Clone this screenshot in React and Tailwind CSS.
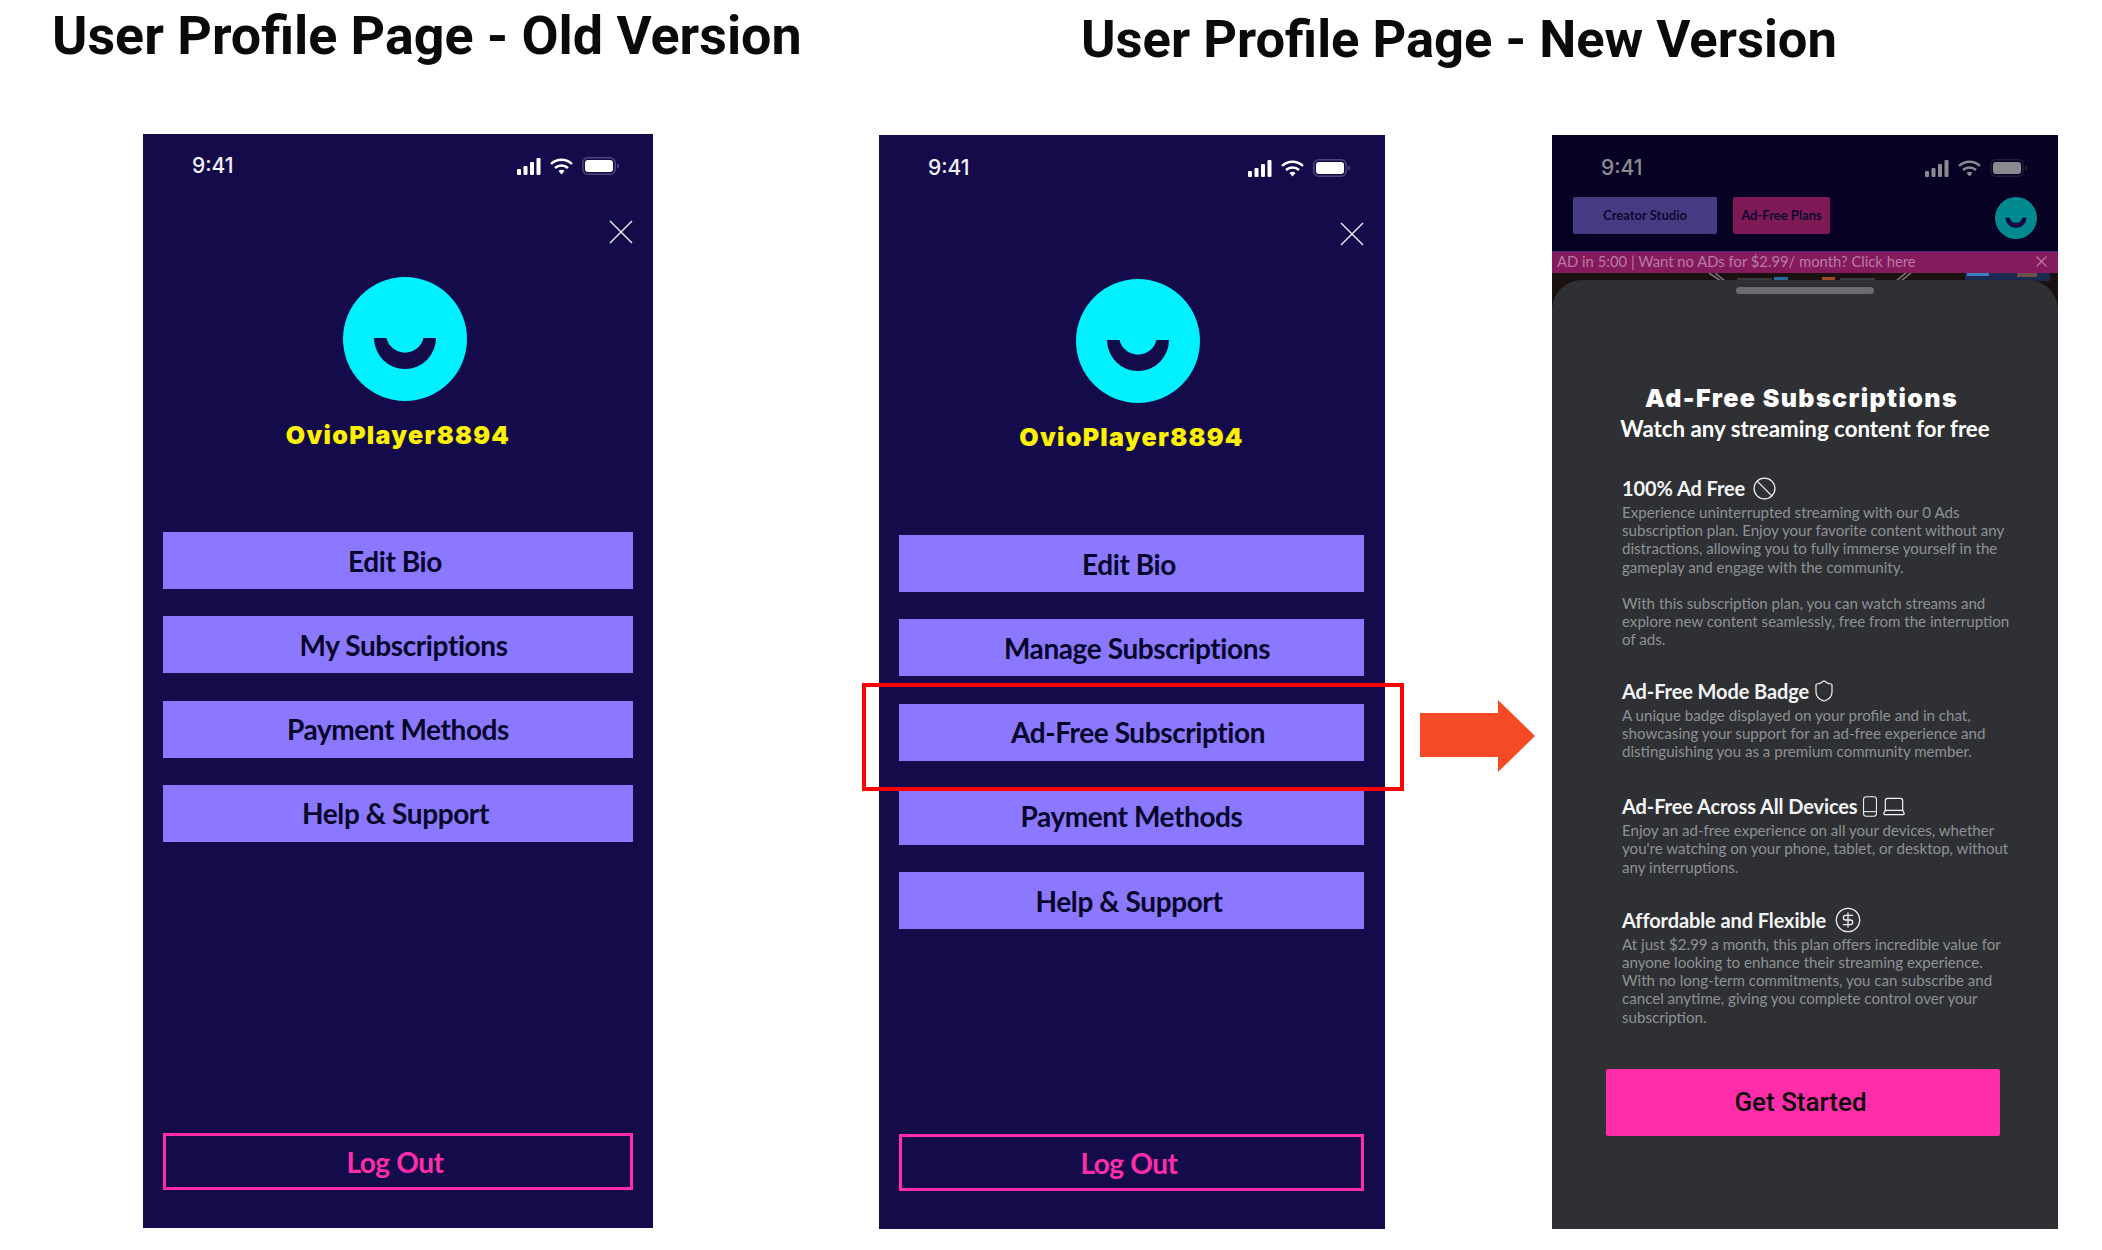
import { Ban, Shield, Laptop, CircleDollarSign } from "lucide-react";

const bodyFont = "font-['Lato','Noto_Sans',sans-serif]";

function CloseIcon({ size, stroke, color }) {
    return (
        <svg width={size} height={size} viewBox="0 0 24 24" fill="none" stroke={color} strokeWidth={stroke}>
            <path d="M1 1l22 22M23 1L1 23" />
        </svg>
    );
}

function StatusIcons({ color, edge }) {
    return (
        <div className="flex items-center gap-[9px]">
            <svg width="24" height="17" viewBox="0 0 24 17">
                <rect x="0" y="11" width="4" height="6" rx="1" fill={color} />
                <rect x="6.5" y="8" width="4" height="9" rx="1" fill={color} />
                <rect x="13" y="4" width="4" height="13" rx="1" fill={color} />
                <rect x="19.5" y="0" width="4" height="17" rx="1" fill={color} />
            </svg>
            <svg width="23" height="17" viewBox="0 0 23 17">
                <path d="M1 6a15 15 0 0 1 21 0" fill="none" stroke={color} strokeWidth="2.4" />
                <path d="M5 10a9.5 9.5 0 0 1 13 0" fill="none" stroke={color} strokeWidth="2.4" />
                <path d="M8.5 13a4.5 4.5 0 0 1 6 0l-3 3.5z" fill={color} />
            </svg>
            <svg width="37" height="18" viewBox="0 0 37 18">
                <rect x="0.8" y="0.8" width="32.400" height="16.400" rx="5" fill="none" stroke={edge} strokeWidth="1.6" />
                <rect x="3" y="3" width="28" height="12" rx="3" fill={color} />
                <rect x="35" y="7" width="2" height="4" rx="1" fill={edge} />
            </svg>
        </div>
    );
}

function Smile({ size, color }) {
    return (
        <svg width={size} height={size} viewBox="0 0 124 124">
            <circle cx="62" cy="62" r="62" fill={color} />
            <path d="M31 61h12.500a19 19 0 0 0 37 0H93a31 31 0 0 1-62 0z" fill="#140c4a" />
        </svg>
    );
}

function MenuButton({ label, offset }) {
    return (
        <div className={`flex h-[57px] items-center justify-center bg-[#8b78ff] text-[28px] font-bold tracking-[-0.4px] text-[#07052a] ${bodyFont} ${offset}`}>
            {label}
        </div>
    );
}

function ProfilePhone({ items, avatarShift, logoutOffset, width, statusHeight, edgeRight, closeGap, listGap }) {
    return (
        <div className={`flex h-[1094px] flex-col bg-[#140c4a] pl-[20px] ${edgeRight} ${width}`}>
            <div className={`flex items-center justify-between pl-[29px] pr-[14px] ${statusHeight}`}>
                <span className="font-['Inter',sans-serif] text-[21px] font-medium text-[#f2f2f6]">9:41</span>
                <StatusIcons color="#ffffff" edge="#4a4478" />
            </div>
            <div className={`flex justify-end ${closeGap}`}>
                <CloseIcon size={24} stroke={1.4} color="#f2f2f6" />
            </div>
            <div className={`mt-[33px] flex justify-center ${avatarShift}`}>
                <Smile size={124} color="#00f0ff" />
            </div>
            <div className="mt-[19px] text-center font-['Inter',sans-serif] text-[25px] leading-[30px] font-black tracking-[1.3px] text-[#fff200]">
                OvioPlayer8894
            </div>
            <div className={`flex flex-col gap-[27.300px] ${listGap}`}>
                {items.map((item) => (
                    <MenuButton key={item.label} label={item.label} offset={item.offset} />
                ))}
            </div>
            <div className={`mt-auto mb-[38px] flex h-[57px] items-center justify-center border-[3px] border-[#ff2daa] text-[28px] font-bold tracking-[-0.4px] text-[#ff2daa] ${bodyFont} ${logoutOffset}`}>
                Log Out
            </div>
        </div>
    );
}

function Feature({ title, icons, className, children }) {
    return (
        <div className={className}>
            <div className={`flex h-[24px] items-center gap-[5px] text-[20px] font-bold tracking-[-0.1px] text-[#f4f4f4] ${bodyFont}`}>
                <span>{title}</span>
                {icons}
            </div>
            <p className={`mt-[3px] text-[15.100px] leading-[18.2px] whitespace-nowrap text-[#8f9194] ${bodyFont}`}>{children}</p>
        </div>
    );
}

function SubscriptionPhone() {
    return (
        <div className="flex h-[1094px] w-[506px] flex-col bg-[#070224]">
            <div className="flex h-[66px] items-center justify-between pl-[49px] pr-[31px]">
                <span className="font-['Inter',sans-serif] text-[21px] font-medium text-[#8a8a92]">9:41</span>
                <StatusIcons color="#8a8a92" edge="#1f1d38" />
            </div>
            <div className="-mt-[4px] flex h-[54px] items-start px-[21px]">
                <div className={`flex h-[37px] w-[144px] items-center justify-center rounded-[2px] bg-[#483a82] text-[13px] font-bold text-[#0c0830] ${bodyFont}`}>Creator Studio</div>
                <div className={`ml-[16px] flex h-[37px] w-[97px] items-center justify-center rounded-[2px] bg-[#7d1a56] text-[13px] font-bold text-[#0c0830] ${bodyFont}`}>Ad-Free Plans</div>
                <div className="ml-auto">
                    <Smile size={42} color="#008a8f" />
                </div>
            </div>
            <div className={`flex h-[22px] items-center justify-between border-t border-[#4a2a78] bg-[#851a5c] pb-[2px] pl-[5px] pr-[11px] text-[14.800px] whitespace-nowrap text-[#b87aa5] ${bodyFont}`}>
                <span>AD in 5:00 | Want no ADs for $2.99/ month? Click here</span>
                <CloseIcon size={11} stroke={2.6} color="#b87aa5" />
            </div>
            <div className="relative flex flex-1 flex-col overflow-hidden bg-[#1a1210] pt-[7px]">
                <svg className="absolute top-0 left-0" width="506" height="8" viewBox="0 0 506 8">
                    <path d="M157 0l12 8M163 0l10 8M349 8l10-8M344 8l10-8" stroke="#77777c" strokeWidth="1.6" />
                    <rect x="185" y="5" width="35" height="3" fill="#3a3a3e" />
                    <rect x="222" y="4" width="14" height="4" fill="#2a6a9a" />
                    <rect x="270" y="4" width="13" height="4" fill="#a04a2a" />
                    <rect x="288" y="5" width="35" height="3" fill="#3a3a3e" />
                    <rect x="413" y="0" width="85" height="8" fill="#1c2a52" />
                    <rect x="415" y="0" width="22" height="3" fill="#3f7fc4" />
                    <rect x="465" y="0" width="20" height="4" fill="#6a5048" />
                </svg>
                <div className="relative flex flex-1 flex-col rounded-t-[30px] bg-[#2e3034]">
                    <div className="mx-auto mt-[7px] h-[7px] w-[138px] rounded-full bg-[#6b6c6e]" />
                    <div className="mt-[89px] pr-[7px] text-center font-['Inter',sans-serif] text-[25px] leading-[30px] font-black tracking-[1.4px] text-white">
                        Ad-Free Subscriptions
                    </div>
                    <div className={`mt-[2px] text-center text-[22.300px] leading-[28px] font-bold text-white ${bodyFont}`}>
                        Watch any streaming content for free
                    </div>
                    <div className="pl-[70px]">
                        <Feature className="mt-[33px]" title="100% Ad Free" icons={<Ban size={25} strokeWidth={1.2} className="ml-[2px]" />}>
                            Experience uninterrupted streaming with our 0 Ads<br />
                            subscription plan. Enjoy your favorite content without any<br />
                            distractions, allowing you to fully immerse yourself in the<br />
                            gameplay and engage with the community.<br />
                            <br />
                            With this subscription plan, you can watch streams and<br />
                            explore new content seamlessly, free from the interruption<br />
                            of ads.
                        </Feature>
                        <Feature className="mt-[30px]" title="Ad-Free Mode Badge" icons={<Shield size={24} strokeWidth={1.2} className="-ml-[2px]" />}>
                            A unique badge displayed on your profile and in chat,<br />
                            showcasing your support for an ad-free experience and<br />
                            distinguishing you as a premium community member.
                        </Feature>
                        <Feature
                            className="mt-[34px]"
                            title="Ad-Free Across All Devices"
                            icons={
                                <span className="flex items-center gap-[4px]">
                                    <svg width="14" height="21" viewBox="0 0 15 22" fill="none" stroke="currentColor" strokeWidth="1.1">
                                        <rect x="0.6" y="0.6" width="13.800" height="20.800" rx="3" />
                                        <path d="M1 16.500h13" />
                                    </svg>
                                    <Laptop size={26} strokeWidth={1.1} />
                                </span>
                            }
                        >
                            Enjoy an ad-free experience on all your devices, whether<br />
                            you're watching on your phone, tablet, or desktop, without<br />
                            any interruptions.
                        </Feature>
                        <Feature className="mt-[32px]" title="Affordable and Flexible" icons={<CircleDollarSign size={28} strokeWidth={1.1} className="ml-[3px]" />}>
                            At just $2.99 a month, this plan offers incredible value for<br />
                            anyone looking to enhance their streaming experience.<br />
                            With no long-term commitments, you can subscribe and<br />
                            cancel anytime, giving you complete control over your<br />
                            subscription.
                        </Feature>
                    </div>
                    <div className="mt-[43px] ml-[54px] flex h-[67px] w-[394px] items-center justify-center rounded-[2px] bg-[#ff2daa] pr-[5px] pt-[1px] font-['Roboto',sans-serif] text-[26px] font-medium text-[#0a0a0a]">
                        Get Started
                    </div>
                </div>
            </div>
        </div>
    );
}

const oldItems = [
    { label: "Edit Bio", offset: "pr-[6px]" },
    { label: "My Subscriptions", offset: "pl-[11px]" },
    { label: "Payment Methods", offset: "" },
    { label: "Help & Support", offset: "pr-[5px]" },
];

const newItems = [
    { label: "Edit Bio", offset: "pr-[5px]" },
    { label: "Manage Subscriptions", offset: "pl-[11px]" },
    { label: "Ad-Free Subscription", offset: "pl-[13px]" },
    { label: "Payment Methods", offset: "" },
    { label: "Help & Support", offset: "pr-[5px]" },
];

export default function App() {
    return (
        <div className="flex h-[1250px] w-[2102px] overflow-hidden bg-white">
            <div className="w-[879px] shrink-0">
                <h1 className="flex h-[134px] items-start pt-[8px] pl-[52px] font-['Roboto',sans-serif] text-[53.800px] leading-[56px] font-bold whitespace-nowrap text-[#0a0a0a]">
                    User Profile Page - Old Version
                </h1>
                <div className="ml-[143px]">
                    <ProfilePhone items={oldItems} avatarShift="pl-[14px]" logoutOffset="pr-[6px]" width="w-[510px]" statusHeight="h-[64px]" edgeRight="pr-[20px]" closeGap="mt-[22px]" listGap="mt-[82px]" />
                </div>
            </div>
            <div className="flex-1">
                <h1 className="flex h-[135px] items-start pt-[11px] pl-[202px] font-['Roboto',sans-serif] text-[52.500px] leading-[56px] font-bold whitespace-nowrap text-[#0a0a0a]">
                    User Profile Page - New Version
                </h1>
                <div className="flex items-start">
                    <div className="relative">
                        <ProfilePhone items={newItems} avatarShift="pl-[12px]" logoutOffset="pr-[5px]" width="w-[506px]" statusHeight="h-[66px]" edgeRight="pr-[21px]" closeGap="mt-[21px]" listGap="mt-[83px]" />
                        <div className="absolute top-[548px] -left-[17px] h-[108px] w-[542px] border-[4px] border-[#ff0000]" />
                    </div>
                    <svg className="mt-[565px] ml-[35px]" width="115" height="72" viewBox="0 0 115 72">
                        <path d="M0 13h78V0l37 36-37 36V57H0z" fill="#f44a25" />
                    </svg>
                    <div className="ml-[17px]">
                        <SubscriptionPhone />
                    </div>
                </div>
            </div>
        </div>
    );
}
